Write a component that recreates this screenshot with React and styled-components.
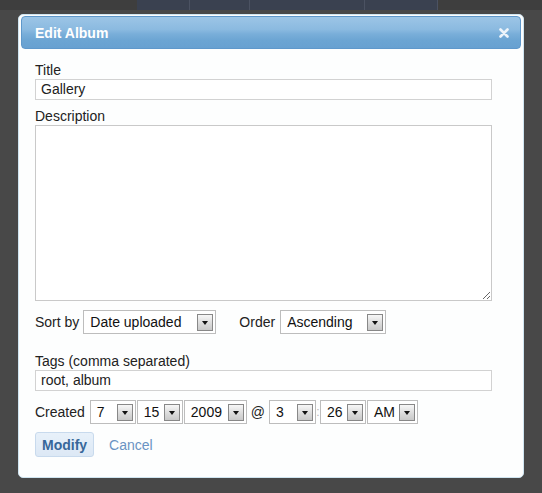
import React from "react";
import styled, { createGlobalStyle } from "styled-components";

const Global = createGlobalStyle`
  html, body { margin: 0; padding: 0; }
  body {
    background: #484848;
    font-family: "Liberation Sans", Arial, sans-serif;
    font-size: 14px;
    color: #222;
    width: 542px;
    height: 493px;
    overflow: hidden;
  }
`;

const Page = styled.div`
  display: flex;
  flex-direction: column;
  height: 493px;
`;

const TopStrip = styled.div`
  display: flex;
  height: 10px;
  background: #3e3e3e;
  padding-left: 137px;
`;

const NavBlock = styled.div`
  width: ${(p) => p.$w}px;
  height: 10px;
  background: #3a4150;
  border-right: 1px solid #4b5262;
  box-sizing: border-box;
`;

const Dialog = styled.div`
  margin: 4px 0 0 18px;
  width: 506px;
  height: 464px;
  box-sizing: border-box;
  background: #fdfefe;
  border: 1px solid #cfe5f1;
  border-radius: 5px;
  padding: 1px 2px 0;
  display: flex;
  flex-direction: column;
`;

const TitleBar = styled.div`
  height: 33px;
  box-sizing: border-box;
  border: 1px solid #5f98cb;
  border-radius: 4px;
  background: linear-gradient(
    to bottom,
    #9cc5e6 0%,
    #8bbae0 40%,
    #79aed9 55%,
    #6ca5d3 75%,
    #68a1d1 100%
  );
  display: flex;
  align-items: center;
  justify-content: space-between;
  padding: 0 10px 0 13px;
`;

const TitleText = styled.span`
  color: #fff;
  font-weight: bold;
  font-size: 14px;
`;

const CloseBtn = styled.span`
  display: flex;
  width: 12px;
  height: 12px;
  align-items: center;
  justify-content: center;
`;

const Form = styled.div`
  display: flex;
  flex-direction: column;
  padding: 13px 29px 0 14px;
`;

const Label = styled.div`
  line-height: 16px;
  height: 16px;
  margin-bottom: 1px;
  color: #222;
`;

const TextInput = styled.div`
  height: 21px;
  box-sizing: border-box;
  border: 1px solid #d2d2d2;
  background: #fff;
  padding: 0 5px;
  line-height: 19px;
  color: #222;
  margin-bottom: ${(p) => p.$mb}px;
`;

const TextArea = styled.textarea`
  display: block;
  height: 176px;
  width: 100%;
  box-sizing: border-box;
  border: 1px solid #c9c9c9;
  background: #fff;
  margin: 0 0 9px;
  padding: 2px 4px;
  font-family: inherit;
  font-size: 14px;
  outline: none;
`;

const Row = styled.div`
  display: flex;
  align-items: center;
  height: 24px;
  margin-bottom: ${(p) => p.$mb}px;
`;

const RowLabel = styled.span`
  margin-right: ${(p) => p.$mr}px;
  margin-left: ${(p) => p.$ml || 0}px;
  color: #222;
`;

const Select = styled.div`
  display: flex;
  align-items: center;
  justify-content: space-between;
  width: ${(p) => p.$w}px;
  height: ${(p) => p.$h}px;
  box-sizing: border-box;
  border: 1px solid #bdbdbd;
  background: #fff;
  padding: 0 2px 0 6px;
  margin-right: ${(p) => p.$mr || 0}px;
  color: #111;
`;

const ArrowBox = styled.span`
  width: 16px;
  height: 17px;
  box-sizing: border-box;
  border: 1px solid #888;
  background: linear-gradient(to bottom, #f7f7f7, #d9d9d9 60%, #c9c9c9);
  display: flex;
  align-items: center;
  justify-content: center;
  &::after {
    content: "";
    border-left: 3.5px solid transparent;
    border-right: 3.5px solid transparent;
    border-top: 4px solid #111;
    margin-top: 1px;
  }
`;

const At = styled.span`
  margin-right: 4px;
  color: #222;
`;

const Colon = styled.span`
  width: 4px;
  color: #b5b5b5;
  font-size: 12px;
  text-align: center;
`;

const Actions = styled.div`
  display: flex;
  align-items: center;
  gap: 15px;
`;

const Button = styled.button`
  height: 25px;
  box-sizing: border-box;
  padding: 0 6px;
  border: 1px solid #c8daed;
  border-radius: 3px;
  background: linear-gradient(to bottom, #e8f1fa, #dce8f5);
  color: #37679a;
  font-family: inherit;
  font-size: 14px;
  font-weight: bold;
`;

const CancelLink = styled.a`
  color: #6a93c3;
  text-decoration: none;
  font-size: 14px;
`;

function Dropdown({ value, w, h = 24, mr }) {
  return (
    <Select $w={w} $h={h} $mr={mr} role="combobox">
      <span>{value}</span>
      <ArrowBox />
    </Select>
  );
}

export default function App() {
  return (
    <>
      <Global />
      <Page>
        <TopStrip>
          <NavBlock $w={53} />
          <NavBlock $w={60} />
          <NavBlock $w={115} />
          <NavBlock $w={73} />
        </TopStrip>
        <Dialog>
          <TitleBar>
            <TitleText>Edit Album</TitleText>
            <CloseBtn>
              <svg width="10" height="10" viewBox="0 0 10 10">
                <path
                  d="M1.5 1.5 L8.5 8.5 M8.5 1.5 L1.5 8.5"
                  stroke="#eef4fa"
                  strokeWidth="2.6"
                  strokeLinecap="round"
                />
              </svg>
            </CloseBtn>
          </TitleBar>
          <Form>
            <Label>Title</Label>
            <TextInput $mb={8}>Gallery</TextInput>
            <Label>Description</Label>
            <TextArea defaultValue="" />
            <Row $mb={19}>
              <RowLabel $mr={4}>Sort by</RowLabel>
              <Dropdown value="Date uploaded" w={133} />
              <RowLabel $ml={23} $mr={5}>Order</RowLabel>
              <Dropdown value="Ascending" w={106} />
            </Row>
            <Label>Tags (comma separated)</Label>
            <TextInput $mb={9}>root, album</TextInput>
            <Row $mb={8}>
              <RowLabel $mr={5}>Created</RowLabel>
              <Dropdown value="7" w={46} mr={1} />
              <Dropdown value="15" w={46} mr={1} />
              <Dropdown value="2009" w={63} mr={4} />
              <At>@</At>
              <Dropdown value="3" w={47} />
              <Colon>:</Colon>
              <Dropdown value="26" w={46} mr={1} />
              <Dropdown value="AM" w={51} />
            </Row>
            <Actions>
              <Button>Modify</Button>
              <CancelLink href="#">Cancel</CancelLink>
            </Actions>
          </Form>
        </Dialog>
      </Page>
    </>
  );
}
